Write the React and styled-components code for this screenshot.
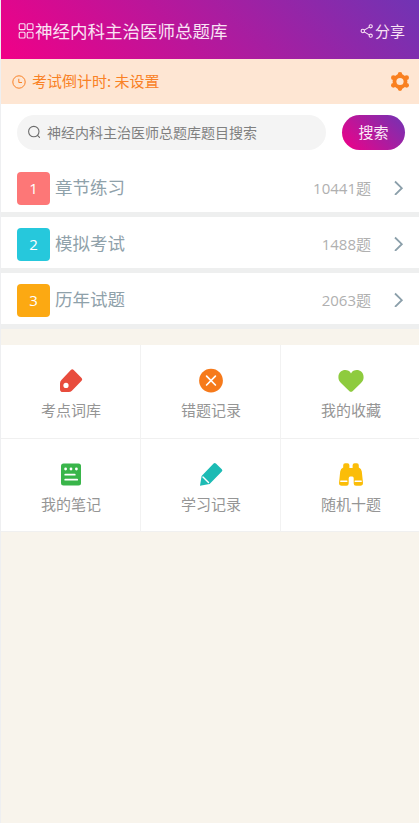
import React from 'react';
import styled, { createGlobalStyle } from 'styled-components';

const GlobalStyle = createGlobalStyle`
  * {
    box-sizing: border-box;
  }

  body {
    margin: 0;
    background: #f8f4ec;
    font-family: "Noto Sans CJK SC", sans-serif;
    font-size: 15px;
  }
`;

const Page = styled.div`
  min-height: 100vh;
  border-left: 1px solid #eeeff1;
  background: #f8f4ec;
`;

const Header = styled.header`
  display: flex;
  align-items: center;
  justify-content: space-between;
  height: 59px;
  padding: 2px 14px 0 17px;
  background: linear-gradient(45deg, #f10087 0%, #7034b4 100%);
  color: #f9e3f4;
`;

const Title = styled.h1`
  display: flex;
  align-items: center;
  gap: 1px;
  margin: 0;
  font-size: 17.5px;
  font-weight: 400;
  line-height: 26px;
`;

const Share = styled.div`
  display: flex;
  align-items: center;
  gap: 1px;
  line-height: 22px;
`;

const Notice = styled.div`
  display: flex;
  align-items: center;
  height: 45px;
  padding: 0 9px 0 11px;
  background: #fee6d3;
  color: #f98125;
`;

const NoticeText = styled.span`
  flex: 1;
  margin: 0 0 2px 6px;
  line-height: 22px;
`;

const SearchBar = styled.div`
  display: flex;
  align-items: center;
  justify-content: space-between;
  height: 57px;
  padding: 0 14px 0 16px;
  background: #fff;
`;

const SearchField = styled.div`
  display: flex;
  align-items: center;
  gap: 5px;
  width: 309px;
  height: 35px;
  padding-left: 10px;
  border-radius: 18px;
  background: #f4f4f4;
`;

const Placeholder = styled.span`
  margin-bottom: 2px;
  color: #808080;
  font-size: 14px;
  line-height: 20px;
`;

const SearchButton = styled.button`
  width: 63px;
  height: 35px;
  padding: 0 0 2px;
  border: none;
  border-radius: 18px;
  background: linear-gradient(45deg, #f10087 0%, #7034b4 100%);
  color: #fbeaf7;
  font-family: inherit;
  font-size: 15px;
`;

const Row = styled.div`
  display: flex;
  align-items: center;
  height: 56px;
  padding: 0 14px 0 16px;
  border-bottom: 5px solid #eeefef;
  background: #fff;
`;

const Badge = styled.span`
  width: 33px;
  height: 33px;
  margin-top: 3px;
  border-radius: 4px;
  background: ${(props) => props.$color};
  color: #fff;
  font-family: "Open Sans", sans-serif;
  line-height: 33px;
  text-align: center;
`;

const RowLabel = styled.span`
  flex: 1;
  margin-left: 5px;
  color: #8fa1aa;
  font-size: 17.5px;
  line-height: 26px;
`;

const Count = styled.span`
  margin: 3px 22px 0 0;
  color: #b0b0b0;
  font-family: "Open Sans", "Noto Sans CJK SC", sans-serif;
  line-height: 22px;
`;

const Grid = styled.div`
  display: grid;
  grid-template-columns: 140px 140px 1fr;
  margin-top: 16px;
`;

const Cell = styled.div`
  display: flex;
  flex-direction: column;
  align-items: center;
  height: 93.5px;
  padding: 23px 0 0 1px;
  border-bottom: 1px solid #f0f0f0;
  border-right: 1px solid #f2f2f2;
  background: #fff;
  color: #959595;

  &:nth-child(3n) {
    padding-left: 2px;
    border-right: none;
  }
`;

const CellLabel = styled.span`
  margin-top: 5px;
  line-height: 22px;
`;

const AppsIcon = () => (
  <svg width="16" height="16" viewBox="0 0 16 16" fill="none" stroke="currentColor" strokeWidth="1.1">
    <rect x="1.2" y=".8" width="5.8" height="5.8" rx="1" />
    <rect x="9.2" y=".8" width="5.8" height="5.8" rx="1" />
    <rect x="1.2" y="9.2" width="5.8" height="5.8" rx="1" />
    <rect x="9.2" y="9.2" width="5.8" height="5.8" rx="1" />
  </svg>
);

const ShareIcon = () => (
  <svg width="14" height="14" viewBox="0 0 14 14" fill="none" stroke="currentColor" strokeWidth="1.1">
    <circle cx="2.8" cy="7" r="1.7" />
    <circle cx="10.7" cy="2.3" r="1.6" />
    <circle cx="10.7" cy="11.7" r="1.6" />
    <path d="M4.3 6.1 9.3 3.1M4.3 7.9l5 3" />
  </svg>
);

const ClockIcon = () => (
  <svg width="14" height="14" viewBox="0 0 14 14" fill="none" stroke="currentColor" strokeWidth="1">
    <circle cx="7" cy="7" r="6.2" />
    <path d="M6.8 3.8v3.7h3.2" />
  </svg>
);

const GearIcon = () => (
  <svg width="20" height="20" viewBox="0 0 20 20">
    <g fill="#f98020">
      <circle cx="10" cy="9.5" r="7.4" />
      <circle cx="10" cy="2.4" r="2.3" />
      <circle cx="10" cy="16.6" r="2.3" />
      <circle cx="3.4" cy="5.7" r="2.4" />
      <circle cx="16.6" cy="5.7" r="2.4" />
      <circle cx="3.4" cy="13.300" r="2.4" />
      <circle cx="16.6" cy="13.300" r="2.4" />
    </g>
    <circle cx="10" cy="9.5" r="3.6" fill="#fee6d3" />
  </svg>
);

const SearchIcon = () => (
  <svg width="15" height="15" viewBox="0 0 15 15" fill="none" stroke="#6c6c6c" strokeWidth="1.1" strokeLinecap="round">
    <circle cx="6.8" cy="6.6" r="5.2" />
    <path d="m10.5 10.4 2 2" />
  </svg>
);

const ArrowIcon = () => (
  <svg width="12" height="16" viewBox="0 0 12 16" fill="none" stroke="#8b9faa" strokeWidth="1.8">
    <path d="m2 2.5 6.8 6.7L2 15.9" />
  </svg>
);

const TagIcon = () => (
  <svg width="26" height="26" viewBox="0 0 26 26">
    <path
      d="M12.8 2q1.5-1.3 2.9 0l7.9 8q1.3 1.4 0 2.8l-9.7 9.9q-1.3 1.3-3.1 1.3H4.8Q2 24 2 21.2v-5.8q0-2 1.4-3.4Z"
      fill="#e84c3d"
    />
    <circle cx="8" cy="17.4" r="2.6" fill="#fff" />
  </svg>
);

const WrongIcon = () => (
  <svg width="26" height="26" viewBox="0 0 26 26">
    <circle cx="13" cy="12.6" r="11.9" fill="#f67a1b" />
    <path d="m8.6 8.2 8.8 8.8m0-8.8-8.8 8.8" stroke="#fff" strokeWidth="1.7" strokeLinecap="round" />
  </svg>
);

const HeartIcon = () => (
  <svg width="26" height="26" viewBox="0 0 26 26">
    <path
      d="M13 5.4C16-.2 25.6 1.4 25.6 9.2c0 2.4-1 4.1-2.6 5.7l-8.2 8.1q-1.8 1.7-3.6 0L3 14.9C1.4 13.3.4 11.6.4 9.2.4 1.4 10-.2 13 5.4Z"
      fill="#8ecb3e"
    />
  </svg>
);

const NoteIcon = () => (
  <svg width="26" height="26" viewBox="0 0 26 26">
    <rect x="3" y="1.5" width="20" height="22" rx="2.5" fill="#39b54a" />
    <g fill="#fff">
      <circle cx="7.6" cy="7" r="1.4" />
      <circle cx="13" cy="7" r="1.4" />
      <circle cx="18.4" cy="7" r="1.4" />
    </g>
    <path d="M7.2 12.7h9.6M7.2 17.7h12" stroke="#fff" strokeWidth="1.7" strokeLinecap="round" />
  </svg>
);

const PencilIcon = () => (
  <svg width="26" height="26" viewBox="0 0 26 26">
    <path d="M15.6 1.6q1.1-1.1 2.3 0l5.9 5.6q1.2 1.2 0 2.4L11.6 21.9 2 23.7l1.6-9.7Z" fill="#1cbbb4" />
    <path d="m5 14.9 5.5 5.5" stroke="#fff" strokeWidth="1.4" strokeLinecap="round" />
  </svg>
);

const BinocularsIcon = () => (
  <svg width="26" height="26" viewBox="0 0 26 26">
    <path
      d="M7.2 1.3h2.2q2 0 2 2v2.8h3.2V3.3q0-2 2-2h2.2q2 0 2 2v2.2q2.6 1 3 4l1.2 11.5q0 2.7-2.7 2.7h-4.3q-2.3 0-2.3-2.3v-5.2q0-1.800-1.400-1.800h-2.200q-1.400 0-1.400 1.800v5.200q0 2.300-2.300 2.300H3.700Q1 23.700 1 21L2.200 9.500q.4-3 3-4V3.300q0-2 2-2Z"
      fill="#fbbd08"
    />
    <path d="M2.8 19.2h6M17.2 19.2h6" stroke="#fff" strokeWidth="1.5" strokeLinecap="round" />
  </svg>
);

const sections = [
  { label: '章节练习', count: 10441, color: '#fd7777' },
  { label: '模拟考试', count: 1488, color: '#26c8dc' },
  { label: '历年试题', count: 2063, color: '#fca912' },
];

const tools = [
  { label: '考点词库', Icon: TagIcon },
  { label: '错题记录', Icon: WrongIcon },
  { label: '我的收藏', Icon: HeartIcon },
  { label: '我的笔记', Icon: NoteIcon },
  { label: '学习记录', Icon: PencilIcon },
  { label: '随机十题', Icon: BinocularsIcon },
];

function App() {
  return (
    <Page>
      <GlobalStyle />
      <Header>
        <Title>
          <AppsIcon />
          神经内科主治医师总题库
        </Title>
        <Share>
          <ShareIcon />
          分享
        </Share>
      </Header>

      <Notice>
        <ClockIcon />
        <NoticeText>考试倒计时: 未设置</NoticeText>
        <GearIcon />
      </Notice>

      <SearchBar>
        <SearchField>
          <SearchIcon />
          <Placeholder>神经内科主治医师总题库题目搜索</Placeholder>
        </SearchField>
        <SearchButton>搜索</SearchButton>
      </SearchBar>

      {sections.map(({ label, count, color }, index) => (
        <Row key={label}>
          <Badge $color={color}>{index + 1}</Badge>
          <RowLabel>{label}</RowLabel>
          <Count>{count}题</Count>
          <ArrowIcon />
        </Row>
      ))}

      <Grid>
        {tools.map(({ label, Icon }) => (
          <Cell key={label}>
            <Icon />
            <CellLabel>{label}</CellLabel>
          </Cell>
        ))}
      </Grid>
    </Page>
  );
}

export default App;
